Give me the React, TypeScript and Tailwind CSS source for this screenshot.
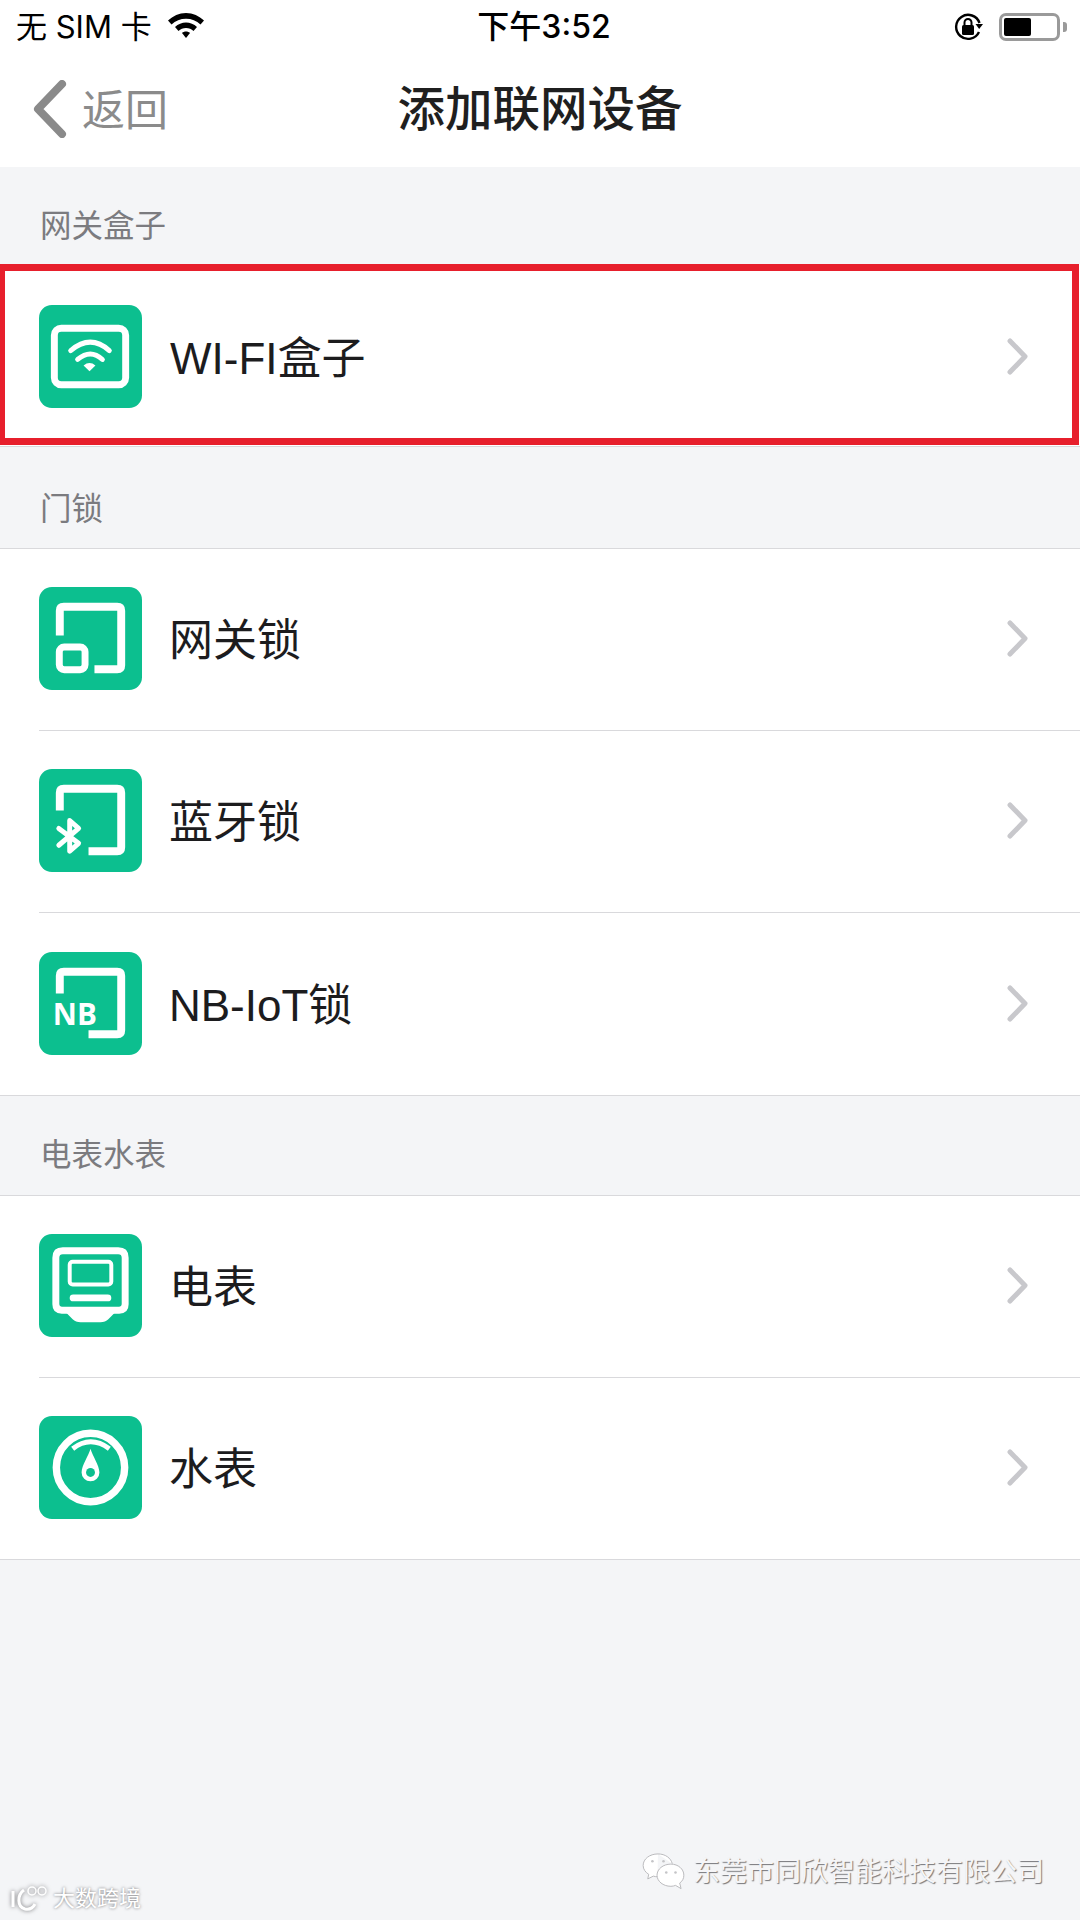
import React from 'react';

const CJK = "font-['Liberation_Sans','Noto_Sans_CJK_SC',sans-serif]";

const Tile: React.FC<{ children: React.ReactNode }> = ({ children }) => (
  <svg width="103" height="103" viewBox="0 0 104 104" fill="none" className="shrink-0">
    <rect width="104" height="104" rx="13" fill="#0cbf8f" />
    {children}
  </svg>
);

const Frame: React.FC<{ leftEnd: number; bottomEnd: number }> = ({ leftEnd, bottomEnd }) => (
  <path
    d={`M21 ${leftEnd}V24Q21 20 25 20H79Q83 20 83 24V79Q83 83 79 83H${bottomEnd}`}
    stroke="#fff"
    strokeWidth="8"
  />
);

const WifiBoxIcon = () => (
  <Tile>
    <rect x="15.500" y="23.500" width="72" height="57" rx="7" stroke="#fff" strokeWidth="7" />
    <path d="M32 46Q52 29 71 46" stroke="#fff" strokeWidth="5" strokeLinecap="round" />
    <path d="M39 55Q52 44 64 55" stroke="#fff" strokeWidth="5" strokeLinecap="round" />
    <path d="M45 61Q51 56 57 61L51 67Z" fill="#fff" />
  </Tile>
);

const GatewayLockIcon = () => (
  <Tile>
    <Frame leftEnd={49} bottomEnd={56} />
    <rect x="20.500" y="60.500" width="26" height="23" rx="5" stroke="#fff" strokeWidth="7" />
  </Tile>
);

const BluetoothLockIcon = () => (
  <Tile>
    <Frame leftEnd={42} bottomEnd={50} />
    <path d="M20 60L40 75L31 83V52L40 60L20 77" stroke="#fff" strokeWidth="5" strokeLinecap="round" strokeLinejoin="round" />
  </Tile>
);

const NbLockIcon = () => (
  <Tile>
    <Frame leftEnd={42} bottomEnd={50} />
    <text x="14" y="73.500" fill="#fff" fontSize="30" fontWeight="700" fontFamily="'Open Sans', sans-serif">
      NB
    </text>
  </Tile>
);

const MeterIcon = () => (
  <Tile>
    <path d="M23 77Q17 77 17 71V24Q17 17 24 17H80Q87 17 87 24V71Q87 77 81 77Z" stroke="#fff" strokeWidth="7" />
    <path d="M26 78H78L70 86Q67 89 62 89H42Q37 89 34 86Z" fill="#fff" />
    <rect x="31" y="28" width="42" height="23" rx="3" stroke="#fff" strokeWidth="4" />
    <rect x="31" y="61" width="42" height="7" rx="3.500" fill="#fff" />
  </Tile>
);

const GaugeIcon = () => (
  <Tile>
    <circle cx="52" cy="52" r="34.500" stroke="#fff" strokeWidth="7.500" />
    <path d="M34 33Q52 19 71 33" stroke="#fff" strokeWidth="5" />
    <path d="M52 33C54 40 61 50 61 57A9 9 0 1 1 43 57C43 50 50 40 52 33Z" fill="#fff" />
    <circle cx="52" cy="57" r="4.500" fill="#0cbf8f" />
  </Tile>
);

const Chevron = () => (
  <svg width="22" height="37" viewBox="0 0 22 37" fill="none" className="shrink-0">
    <path d="M3 3L18 18.500L3 34" stroke="#c8c8cc" strokeWidth="5" strokeLinecap="round" strokeLinejoin="round" />
  </svg>
);

const Row: React.FC<{ icon: React.ReactNode; label: string; divider?: boolean; height?: string }> = ({
  icon,
  label,
  divider,
  height = 'h-[182px]',
}) => (
  <div className={`ml-[39px] flex items-center pb-[2px] pr-[51px] ${height} ${divider ? 'border-b border-[#d9d9dc]' : ''}`}>
    {icon}
    <span className="ml-[27px] mt-[5px] flex-1 text-[44px] leading-[52px] text-[#1c1c1e]">{label}</span>
    <Chevron />
  </div>
);

const SectionTitle: React.FC<{ title: string; className: string }> = ({ title, className }) => (
  <div className={`flex items-end pl-[40px] text-[31.5px] leading-[38px] text-[#7b7b7f] ${className}`}>{title}</div>
);

const StatusBar = () => (
  <div className="relative flex h-[54px] items-center pl-[16px] pr-[13px] font-['Inter','Noto_Sans_CJK_SC',sans-serif] text-[31px] leading-[36px] text-black">
    <span>无 SIM 卡</span>
    <svg width="36" height="27" viewBox="0 0 36 27" className="ml-[16px] mb-[4px]">
      <path d="M18 1C11 1 5 4 0 8.500L3.500 12.500C7.500 8.800 12.500 6.800 18 6.800S28.500 8.800 32.500 12.500L36 8.500C31 4 25 1 18 1Z" />
      <path d="M18 10.500C14 10.500 10 12 7 15L10.500 19C12.500 17 15 16 18 16S23.500 17 25.500 19L29 15C26 12 22 10.500 18 10.500Z" />
      <path d="M18 19.500C16.500 19.500 15 20 14 21L18 26L22 21C21 20 19.500 19.500 18 19.500Z" />
    </svg>
    <span className="absolute left-[8px] right-0 text-center text-[32px] font-medium">下午3:52</span>
    <div className="ml-auto flex items-center">
      <svg width="31" height="28" viewBox="0 0 31 28" fill="none">
        <path d="M26.500 10A12 12 0 1 0 26 19" stroke="#000" strokeWidth="2.400" />
        <path d="M22.500 11H30L26.200 16Z" fill="#000" />
        <rect x="9" y="12" width="12" height="10" rx="1.500" fill="#000" />
        <path d="M11.500 12V9.500A3.500 3.500 0 0 1 18.500 9.500V12" stroke="#000" strokeWidth="2" />
      </svg>
      <div className="ml-[15px] flex h-[28px] w-[61px] items-center rounded-[7px] border-[3px] border-[#9a9a9a] p-[2px]">
        <div className="h-full w-[27px] rounded-[2px] bg-black" />
      </div>
      <div className="ml-[3px] h-[10px] w-[4px] rounded-r-[3px] bg-[#9a9a9a]" />
    </div>
  </div>
);

const NavBar = () => (
  <div className="relative flex h-[113px] items-center pl-[32px] pb-[4px]">
    <svg width="36" height="58" viewBox="0 0 36 58" fill="none">
      <path d="M30 4L6 29L30 54" stroke="#8a8a8a" strokeWidth="8" strokeLinecap="round" strokeLinejoin="round" />
    </svg>
    <span className="ml-[14px] mt-[4px] text-[43px] leading-[48px] text-[#8b8b8b]">返回</span>
    <span className="absolute left-0 right-0 mt-[2px] text-center text-[47.5px] font-medium leading-[56px] text-[#1f1f1f]">
      添加联网设备
    </span>
  </div>
);

const App: React.FC = () => {
  return (
    <div className={`relative h-[1920px] w-[1080px] overflow-hidden bg-[#f4f5f7] ${CJK}`}>
      <div className="h-[167px] bg-white">
        <StatusBar />
        <NavBar />
      </div>

      <SectionTitle title="网关盒子" className="h-[97px] pb-[19px]" />
      <div className="border-b border-[#d9d9dc] bg-white pb-px pr-px">
        <div className="h-[181px] border-y-[7px] border-l-[5px] border-r-[7px] border-[#e71f2c]">
          <div className="ml-[34px] flex h-full items-center pr-[43px] pt-[3px]">
            <WifiBoxIcon />
            <span className="ml-[28px] mt-[5px] flex-1 text-[44px] leading-[52px] text-[#1c1c1e]">WI-FI盒子</span>
            <Chevron />
          </div>
        </div>
      </div>

      <SectionTitle title="门锁" className="h-[101px] pb-[20px]" />
      <div className="border-y border-[#d9d9dc] bg-white">
        <Row icon={<GatewayLockIcon />} label="网关锁" divider />
        <Row icon={<BluetoothLockIcon />} label="蓝牙锁" divider />
        <Row icon={<NbLockIcon />} label="NB-IoT锁" />
      </div>

      <SectionTitle title="电表水表" className="h-[99px] pb-[21px]" />
      <div className="border-y border-[#d9d9dc] bg-white">
        <Row icon={<MeterIcon />} label="电表" divider />
        <Row icon={<GaugeIcon />} label="水表" height="h-[181px]" />
      </div>

      <div className="absolute bottom-[30px] right-[36px] flex items-center">
        <svg width="43" height="37" viewBox="0 0 46 40" fill="none" stroke="#b5b5b8" strokeWidth="1">
          <path d="M17 1C8 1 1 6.500 1 13.500C1 17.500 3.500 21 7 23L6 28L12 25C13.500 25.400 15 25.700 16.500 25.700" fill="#fff" />
          <path d="M17 1C25 1 31 5.500 32.500 11.500" fill="#fff" />
          <path d="M31 12C22.500 12 16 17.500 16 24C16 30.500 22.500 36 31 36C33 36 34.500 35.600 36 35L42 38.500L40.500 32.500C43.500 30.500 45 27.500 45 24C45 17.500 39 12 31 12Z" fill="#fff" />
          <circle cx="11" cy="9" r="1.400" fill="#c4c4c7" stroke="none" />
          <circle cx="23" cy="9" r="1.400" fill="#c4c4c7" stroke="none" />
          <circle cx="26" cy="21" r="1.400" fill="#c4c4c7" stroke="none" />
          <circle cx="36" cy="21" r="1.400" fill="#c4c4c7" stroke="none" />
        </svg>
        <span className="ml-[8px] text-[27px] leading-[34px] text-[#f5f5f7] [text-shadow:1px_1px_1px_#77777a]">
          东莞市同欣智能科技有限公司
        </span>
      </div>

      <div className="absolute bottom-[6px] left-[10px] flex items-center">
        <svg width="40" height="30" viewBox="0 0 40 30" fill="none" stroke="#fff" strokeWidth="3" className="drop-shadow-[0_0_2px_#77777a]">
          <path d="M3 7V23" />
          <path d="M14 6C7 11 7 23 15 25C20 26 23 24 25 20" />
          <circle cx="22" cy="7" r="4" strokeWidth="1.500" />
          <circle cx="32" cy="7" r="4" strokeWidth="1.500" />
        </svg>
        <span className="ml-[3px] text-[22px] leading-[28px] text-white [text-shadow:0_0_3px_#6f6f72]">大数跨境</span>
      </div>
    </div>
  );
};

export default App;
